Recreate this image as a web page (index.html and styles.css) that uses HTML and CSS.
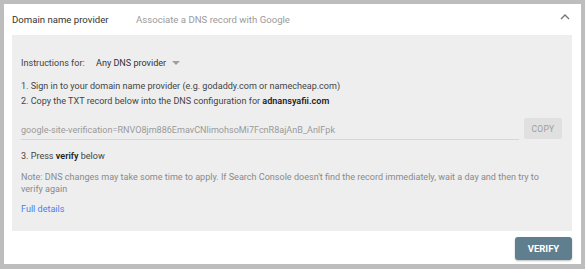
FILE: index.html
```html
<!DOCTYPE html>
<html>
<head>
<meta charset="utf-8">
<link rel="stylesheet" href="styles.css">
</head>
<body>
<div class="card">
  <div class="header">
    <span class="title">Domain name provider</span>
    <span class="subtitle">Associate a DNS record with Google</span>
    <svg class="chev" width="10" height="7" viewBox="0 0 10 7"><path d="M1 6 L5 2 L9 6" fill="none" stroke="#757575" stroke-width="1.4"/></svg>
  </div>
  <div class="panel">
    <div class="instr">
      <span class="label">Instructions for:</span>
      <span class="select">Any DNS provider</span>
      <svg class="tri" width="8" height="4" viewBox="0 0 8 4"><path d="M0 0 L8 0 L4 4 Z" fill="#9e9e9e"/></svg>
    </div>
    <div class="steps">
      <div>1. Sign in to your domain name provider (e.g. godaddy.com or namecheap.com)</div>
      <div>2. Copy the TXT record below into the DNS configuration for <b>adnansyafii.com</b></div>
    </div>
    <div class="record">
      <div class="field">google-site-verification=RNVO8jm886EmavCNlimohsoMi7FcnR8ajAnB_AnIFpk</div>
      <button class="copy">COPY</button>
    </div>
    <div class="step3">3. Press <b>verify</b> below</div>
    <div class="note">Note: DNS changes may take some time to apply. If Search Console doesn't find the record immediately, wait a day and then try to verify again</div>
    <a class="details" href="#">Full details</a>
  </div>
  <div class="footer">
    <button class="verify">VERIFY</button>
  </div>
</div>
</body>
</html>
```
FILE: styles.css
```css
html, body {
  margin: 0;
  padding: 0;
}
body {
  background: #bdbdbd;
  width: 585px;
  height: 269px;
  padding: 4px 4px 0 4px;
  box-sizing: border-box;
  font-family: Roboto, "Liberation Sans", sans-serif;
}
.card {
  background: #fff;
  width: 577px;
  height: 260px;
  box-sizing: border-box;
  padding: 0 9px 0 8px;
  display: flex;
  flex-direction: column;
}
.header {
  height: 31px;
  display: flex;
  align-items: center;
  position: relative;
  font-size: 9.6px;
}
.title {
  color: #333;
  width: 124px;
}
.subtitle {
  color: #9a9a9a;
}
.chev {
  position: absolute;
  right: 2px;
  top: 9px;
}
.panel {
  background: #eeeeee;
  height: 196px;
  box-sizing: border-box;
  padding: 20px 0 0 9px;
  display: flex;
  flex-direction: column;
  font-size: 9.05px;
  color: #444;
}
.instr {
  display: flex;
  align-items: center;
  height: 16px;
}
.label {
  width: 75px;
}
.select {
  color: #333;
}
.tri {
  margin-left: 6px;
}
.steps {
  margin-top: 8px;
  line-height: 15px;
}
.steps b, .step3 b {
  color: #222;
  font-weight: 600;
}
.record {
  display: flex;
  align-items: center;
  margin-top: 8px;
}
.field {
  width: 498px;
  box-sizing: border-box;
  border-bottom: 1px solid #d6d6d6;
  color: #9a9a9a;
  padding: 8px 0 4px;
}
.copy {
  margin-left: 5px;
  width: 38px;
  height: 21px;
  border: none;
  border-radius: 2px;
  background: #e0e0e0;
  color: #9e9e9e;
  font-family: inherit;
  font-size: 8.5px;
  letter-spacing: 0.3px;
  padding: 0;
}
.step3 {
  margin-top: 11px;
}
.note {
  margin-top: 10px;
  color: #8a8a8a;
  line-height: 12px;
  padding-right: 10px;
}
.details {
  margin-top: 9px;
  color: #4a7ff0;
  text-decoration: none;
  align-self: flex-start;
}
.footer {
  display: flex;
  justify-content: flex-end;
  padding-top: 6px;
}
.verify {
  width: 57px;
  height: 23px;
  border: none;
  border-radius: 3px;
  background: #5f7f8f;
  color: #fff;
  font-family: inherit;
  font-weight: bold;
  font-size: 9.5px;
  padding: 0;
  box-shadow: 0 1px 2px rgba(0,0,0,0.25);
}
```
